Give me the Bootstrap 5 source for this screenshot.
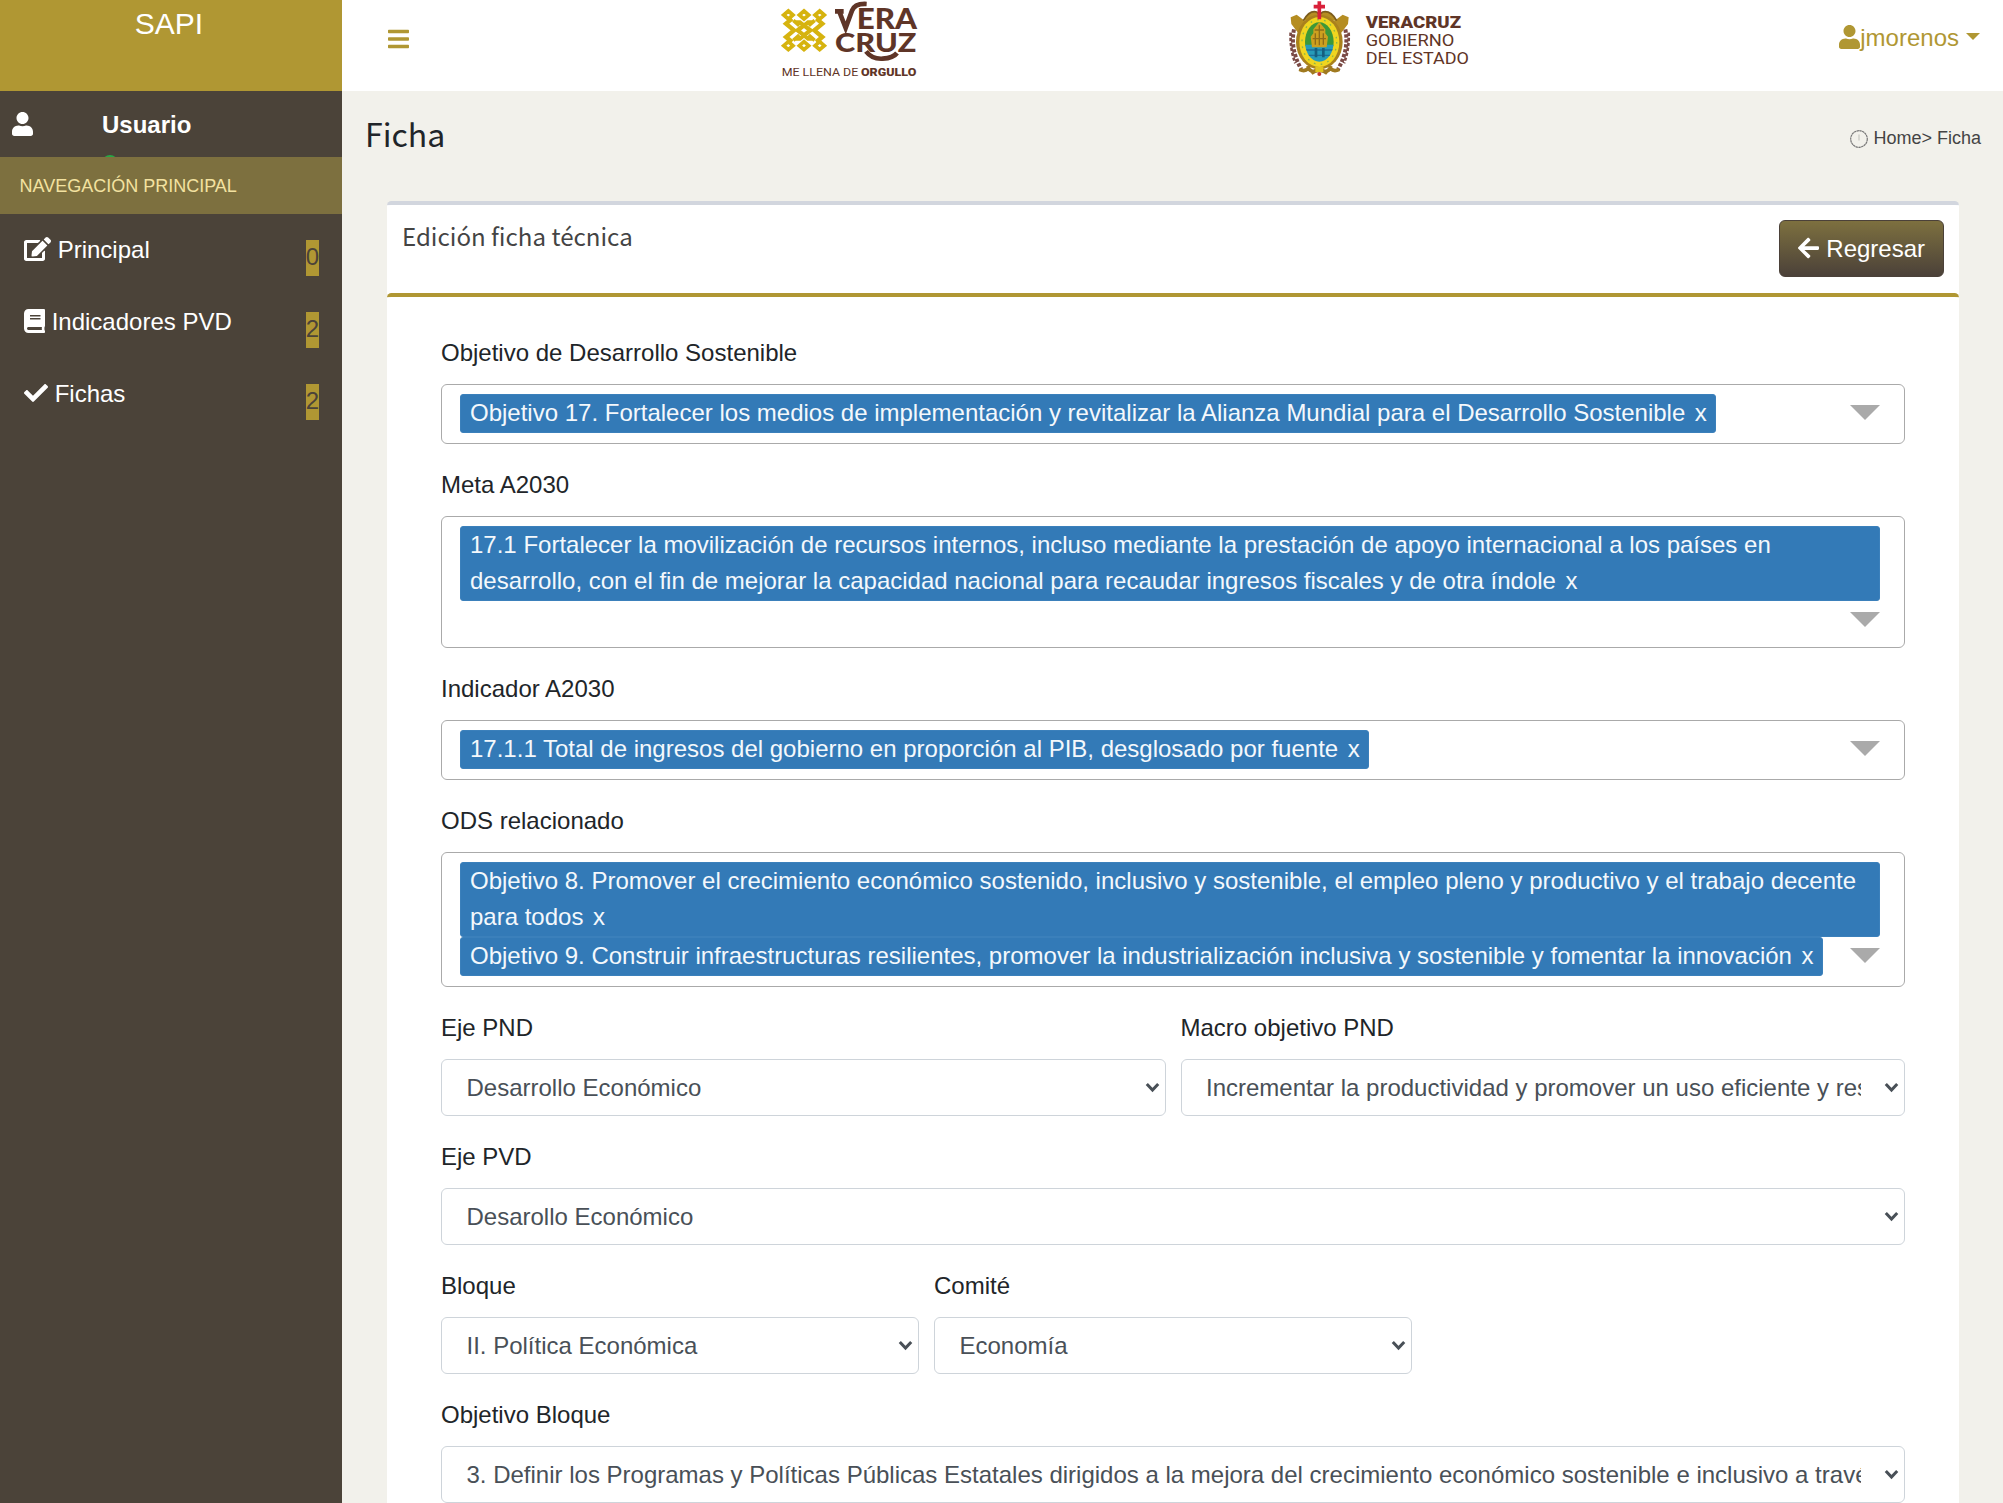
<!DOCTYPE html>
<html lang="es">
<head>
<meta charset="utf-8">
<title>SAPI - Ficha</title>
<link rel="stylesheet" href="https://cdn.jsdelivr.net/npm/bootstrap@5.3.0/dist/css/bootstrap.min.css">
<style>
body{font-family:"Liberation Sans",Arial,sans-serif;font-size:24px;line-height:36px;color:#212529;background:#f2f1eb;height:1503px;overflow:hidden}
.fa-ico{height:24px;width:auto;fill:currentColor;vertical-align:-3px;flex:none}
.side{width:342px;height:1503px;background:#4b4339;color:#fff;flex:none}
.brand{height:91px;background:#b09733;font-size:30px;line-height:45px;padding-top:1px;padding-right:4px}
.user-panel{height:66px;padding:16px 12px 0 12px;overflow:hidden}
.user-panel .fa-ico{margin-top:5px}
.user-info{margin-left:69px}
.status-dot{display:block;width:16px;height:16px;border-radius:50%;background:#28a745;margin-top:12px}
.side-title{height:57px;padding:16px 19.5px 14px;background:#7d703f;color:#f3e2a0;font-size:18px;line-height:27px}
.side-link{height:72px;padding:18px 23px 0 24px;color:#fff;text-decoration:none}
.count{background:#b09733;color:#4b4339;height:36px;margin-top:8px;line-height:34px}
.topbar{height:91px;background:#fff;color:#b09733}
.topbar>.menu-btn{margin-left:45.5px;margin-top:27px;height:24px;line-height:24px;display:block}
.logo-a{margin-left:361px}
.logo-b{margin-left:350px}
.user-menu{margin:20px 23px 0 auto;color:#b09733}
.user-menu::after{border-width:7px;border-bottom:0;margin-left:7px;vertical-align:6px}
.src-font{font-family:"Noto Sans CJK SC","Noto Sans",sans-serif;font-weight:400}
.page-head{padding:22px 22px 0 23px;height:110px}
.page-head h1{font-size:32px;line-height:40px;margin:0}
.crumbs{font-size:18px;line-height:27px;color:#444;padding-top:12px;gap:5px}
.panel{margin:0 44px 0 45px;background:#fff;border-top:4px solid #d2d6de;border-radius:4.5px 4.5px 0 0}
.panel-top{height:88px;padding:15px 15px 0}
.panel-top h3{font-size:24.1px;line-height:32px;color:#444;margin:0}
.btn-back{height:57px;padding:9px 18px;font-size:24px;line-height:36px;color:#fff;border:1.5px solid #4b4139;border-radius:6px;background:linear-gradient(#7d703f,#4b4139)}
.btn-back .fa-ico{margin-right:1px}
.inner{border-top:4px solid #b09733;border-radius:4.5px 4.5px 0 0;padding:38px 54px 0;height:1211px}
.form-group{margin-bottom:23px}
.form-group label{display:block;margin-bottom:13px}
.form-row{--bs-gutter-x:15px}
.multi{border:1.5px solid #aaa;border-radius:6px;padding:9px 24.5px 9.5px 18px;min-height:60px}
.chip{background:#337ab7;border:1px solid #3b80bb;color:#f4f8fc;border-radius:3px;padding:0 8.5px 0 9px;line-height:36px;min-height:39px;max-width:100%}
.chip-lg{min-height:75px}
.chip .rm{margin-left:9.5px}
.tri{width:30px;border:15px solid transparent;border-top-color:#aaa;border-bottom:0;margin:11px 0 0 auto;height:15px}
.meta .tri{margin-top:11px;margin-bottom:10.5px}
.form-group .form-select{height:57px;padding:2px 43px 0 24.5px;font-size:24px;line-height:36px;color:#495057;border:1.5px solid #ced4da;border-radius:6px;
background:#fff url("data:image/svg+xml,%3Csvg xmlns='http://www.w3.org/2000/svg' viewBox='0 0 15 11'%3E%3Cpath d='M1.8 2l5.7 6 5.7-6' fill='none' stroke='%23495057' stroke-width='3'/%3E%3C/svg%3E") no-repeat right 5px center/15px 11px}
</style>
<script src="https://cdn.jsdelivr.net/npm/bootstrap@5.3.0/dist/js/bootstrap.bundle.min.js"></script>
</head>
<body>
<svg class="d-none">
<symbol id="i-user" viewBox="0 0 448 512"><path d="M224 256c70.7 0 128-57.3 128-128S294.7 0 224 0 96 57.3 96 128s57.3 128 128 128zm89.6 32h-16.7c-22.2 10.2-46.9 16-72.9 16s-50.6-5.8-72.9-16h-16.7C60.2 288 0 348.2 0 422.4V464c0 26.5 21.5 48 48 48h352c26.5 0 48-21.5 48-48v-41.6c0-74.2-60.2-134.4-134.4-134.4z"/></symbol>
</svg>
<div class="d-flex">
<aside class="side">
  <div class="brand text-center">SAPI</div>
  <div class="user-panel d-flex">
    <svg class="fa-ico" width="21" height="24"><use href="#i-user"/></svg>
    <div class="user-info"><b class="d-block">Usuario</b><i class="status-dot"></i></div>
  </div>
  <div class="side-title">NAVEGACIÓN PRINCIPAL</div>
  <nav>
    <a class="side-link d-flex justify-content-between align-items-start"><span><svg class="fa-ico" viewBox="0 0 576 512"><path d="M402.6 83.2l90.2 90.2c3.8 3.8 3.8 10 0 13.8L274.4 405.6l-92.8 10.3c-12.4 1.4-22.9-9.1-21.5-21.5l10.3-92.8L388.8 83.2c3.8-3.8 10-3.8 13.8 0zm162-22.9l-48.8-48.8c-15.2-15.2-39.9-15.2-55.2 0l-35.4 35.4c-3.8 3.8-3.8 10 0 13.8l90.2 90.2c3.8 3.8 10 3.8 13.8 0l35.4-35.4c15.2-15.3 15.2-40 0-55.2zM384 346.2V448H64V128h229.8c3.2 0 6.2-1.3 8.5-3.5l40-40c7.6-7.6 2.2-20.5-8.5-20.5H48C21.5 64 0 85.5 0 112v352c0 26.5 21.5 48 48 48h352c26.5 0 48-21.5 48-48V306.2c0-10.7-12.9-16-20.5-8.5l-40 40c-2.2 2.3-3.5 5.3-3.5 8.5z"/></svg> Principal</span><span class="count">0</span></a>
    <a class="side-link d-flex justify-content-between align-items-start"><span><svg class="fa-ico" viewBox="0 0 448 512"><path d="M448 360V24c0-13.3-10.7-24-24-24H96C43 0 0 43 0 96v320c0 53 43 96 96 96h328c13.3 0 24-10.7 24-24v-16c0-7.5-3.5-14.3-8.9-18.7-4.2-15.4-4.2-59.3 0-74.7 5.4-4.3 8.9-11.1 8.9-18.6zM128 134c0-3.3 2.7-6 6-6h212c3.3 0 6 2.7 6 6v20c0 3.3-2.7 6-6 6H134c-3.3 0-6-2.7-6-6v-20zm0 64c0-3.3 2.7-6 6-6h212c3.3 0 6 2.7 6 6v20c0 3.3-2.7 6-6 6H134c-3.3 0-6-2.7-6-6v-20zm253.4 250H96c-17.7 0-32-14.3-32-32 0-17.6 14.4-32 32-32h285.4c-1.9 17.1-1.9 46.9 0 64z"/></svg> Indicadores PVD</span><span class="count">2</span></a>
    <a class="side-link d-flex justify-content-between align-items-start"><span><svg class="fa-ico" viewBox="0 0 512 512"><path d="M173.898 439.404l-166.4-166.4c-9.997-9.997-9.997-26.206 0-36.204l36.203-36.204c9.997-9.998 26.207-9.998 36.204 0L192 312.69 432.095 72.596c9.997-9.997 26.207-9.997 36.204 0l36.203 36.204c9.997 9.997 9.997 26.206 0 36.204l-294.4 294.401c-9.998 9.997-26.207 9.997-36.204-.001z"/></svg> Fichas</span><span class="count">2</span></a>
  </nav>
</aside>
<div class="flex-grow-1">
  <header class="topbar d-flex align-items-start">
    <span class="menu-btn"><svg class="fa-ico d-block" viewBox="0 0 448 512"><path d="M16 132h416c8.837 0 16-7.163 16-16V76c0-8.837-7.163-16-16-16H16C7.163 60 0 67.163 0 76v40c0 8.837 7.163 16 16 16zm0 160h416c8.837 0 16-7.163 16-16v-40c0-8.837-7.163-16-16-16H16c-8.837 0-16 7.163-16 16v40c0 8.837 7.163 16 16 16zm0 160h416c8.837 0 16-7.163 16-16v-40c0-8.837-7.163-16-16-16H16c-8.837 0-16 7.163-16 16v40c0 8.837 7.163 16 16 16z"/></svg></span>
    <!-- Logo Veracruz: rombos y rótulo -->
    <svg class="logo-a" width="160" height="90" viewBox="0 0 480 270">
      <g fill="none" stroke="#d6b30f" stroke-width="11">
        <path d="M55 33l14 12-14 12-14-12zM102 33l14 12-14 12-14-12zM149 33l14 12-14 12-14-12zM55 125l14 12-14 12-14-12zM102 125l14 12-14 12-14-12zM149 125l14 12-14 12-14-12z"/>
        <path d="M102 76l19 15-19 15-19-15z" stroke-width="13"/>
        <path d="M66 56L48 71l24 20-24 20 18 15M139 56l18 15-24 20 24 20-18 15" stroke-width="13"/>
        <path d="M70 61l18 16M134 61l-18 16M70 121l18-16M134 121l-18-16M78 66h12l12 10 12-10h12M78 117h12l12-10 12 10h12"/>
      </g>
      <g fill="#5f3527" font-family="Lato,sans-serif" font-weight="900">
        <text x="260" y="88" font-size="84" textLength="181" lengthAdjust="spacingAndGlyphs">ERA</text>
        <text x="195" y="156" font-size="82" textLength="244" lengthAdjust="spacingAndGlyphs">CRUZ</text>
        <text x="35" y="228" font-size="31" font-weight="400" font-family="Roboto,sans-serif" textLength="230" lengthAdjust="spacingAndGlyphs">ME LLENA DE</text>
        <text x="273" y="228" font-size="31" font-weight="900" font-family="Roboto,sans-serif" textLength="166" lengthAdjust="spacingAndGlyphs">ORGULLO</text>
      </g>
      <path d="M195 34h26M208 35l19 49 19-52q8-22 44-20M288 154q18 24 50 22 32-2 43-17" fill="none" stroke="#5f3527" stroke-width="14"/>
    </svg>
    <!-- Escudo y rótulo del gobierno del estado -->
    <svg class="logo-b" width="200" height="90" viewBox="0 0 600 270">
      <g stroke="#7a4a45" stroke-width="12" stroke-dasharray="10 5" fill="none"><path d="M42 88q-12 60 22 120M196 88q12 60-22 120"/><path d="M32 98q-2 50 14 92M206 98q2 50-14 92" stroke-width="8"/></g>
      <path d="M34 72l-2-20 18-8 34 26-30 28zM204 72l2-20-18-8-34 26 30 28z" fill="#b58d22"/>
      <path d="M70 62q18-32 40-26l8 8 10-8q24-6 42 26" fill="#b58d22" stroke="#7c5c1c" stroke-width="5"/>
      <ellipse cx="118" cy="126" rx="70" ry="82" fill="#a9811d"/>
      <ellipse cx="118" cy="126" rx="60" ry="75" fill="#f0d51f"/>
      <ellipse cx="118" cy="126" rx="52" ry="67" fill="none" stroke="#8bb64a" stroke-width="4" stroke-dasharray="5 16"/>
      <clipPath id="ov"><ellipse cx="118" cy="126" rx="43" ry="59"/></clipPath>
      <g clip-path="url(#ov)"><path d="M70 60h100v78H70z" fill="#3d9838"/><path d="M70 134h100v60H70z" fill="#269bb9"/><path d="M76 150h84M76 166h84" stroke="#1d6e99" stroke-width="4"/>
      <path d="M100 88l18-22 18 22v12l8 10-4 32H96l-4-32 8-10z" fill="#cda01f"/><path d="M104 90h28M98 116h40M106 100v34M130 100v34M118 76v60" stroke="#906c18" stroke-width="4"/><path d="M104 144h8v28h-8zM126 144h8v28h-8z" fill="#155f80"/></g>
      <path d="M118 4v54M101 20h34" stroke="#d9203a" stroke-width="11" fill="none"/>
      <path d="M84 198q4 24 34 12 30 12 34-12M94 220q24-20 48 0M58 208q16 8 26-2M178 208q-16 8-26-2" fill="none" stroke="#a07a20" stroke-width="11"/>
      <path d="M106 200h24v16h-24z" fill="#e0c41d"/><circle cx="118" cy="222" r="6" fill="#c23a2c"/>
      <g fill="#5f3527" font-family="Roboto,sans-serif" font-size="51">
        <text x="257" y="84" font-weight="900" textLength="286" lengthAdjust="spacingAndGlyphs">VERACRUZ</text>
        <text x="257" y="138" textLength="266" lengthAdjust="spacingAndGlyphs">GOBIERNO</text>
        <text x="257" y="191" textLength="310" lengthAdjust="spacingAndGlyphs">DEL ESTADO</text>
      </g>
    </svg>
    <a class="user-menu dropdown-toggle text-decoration-none d-block"><svg class="fa-ico" width="21" height="24"><use href="#i-user"/></svg>jmorenos</a>
  </header>
  <div class="page-head d-flex justify-content-between align-items-start">
    <h1 class="src-font">Ficha</h1>
    <div class="crumbs d-flex align-items-center">
      <svg width="18" height="18" viewBox="0 0 18 18" fill="none"><circle cx="9" cy="9" r="8.3" stroke="#777" stroke-width="1.2" stroke-dasharray="2.4 .4"/><path d="M9 4.5v6" stroke="#d8d8d2" stroke-width="2"/></svg>
      <span>Home&gt; Ficha</span>
    </div>
  </div>
  <main class="panel">
    <div class="panel-top d-flex justify-content-between align-items-start">
      <h3 class="src-font">Edición ficha técnica</h3>
      <button class="btn btn-back"><svg class="fa-ico" viewBox="0 0 448 512"><path d="M257.5 445.1l-22.2 22.2c-9.4 9.4-24.6 9.4-33.9 0L7 273c-9.4-9.4-9.4-24.6 0-33.9L201.4 44.7c9.4-9.4 24.6-9.4 33.9 0l22.2 22.2c9.5 9.5 9.3 25-.4 34.3L136.6 216H424c13.3 0 24 10.7 24 24v32c0 13.3-10.7 24-24 24H136.6l120.5 114.8c9.8 9.3 10 24.8.4 34.3z"/></svg> Regresar</button>
    </div>
    <form class="inner">
      <div class="form-group"><label>Objetivo de Desarrollo Sostenible</label>
        <div class="multi d-flex flex-wrap align-items-start"><div class="chip">Objetivo 17. Fortalecer los medios de implementación y revitalizar la Alianza Mundial para el Desarrollo Sostenible<span class="rm">x</span></div><i class="tri"></i></div></div>
      <div class="form-group"><label>Meta A2030</label>
        <div class="multi meta d-flex flex-wrap align-items-start"><div class="chip chip-lg">17.1 Fortalecer la movilización de recursos internos, incluso mediante la prestación de apoyo internacional a los países en desarrollo, con el fin de mejorar la capacidad nacional para recaudar ingresos fiscales y de otra índole<span class="rm">x</span></div><i class="tri"></i></div></div>
      <div class="form-group"><label>Indicador A2030</label>
        <div class="multi d-flex flex-wrap align-items-start"><div class="chip">17.1.1 Total de ingresos del gobierno en proporción al PIB, desglosado por fuente<span class="rm">x</span></div><i class="tri"></i></div></div>
      <div class="form-group"><label>ODS relacionado</label>
        <div class="multi d-flex flex-wrap align-items-start"><div class="chip chip-lg">Objetivo 8. Promover el crecimiento económico sostenido, inclusivo y sostenible, el empleo pleno y productivo y el trabajo decente para todos<span class="rm">x</span></div><div class="chip">Objetivo 9. Construir infraestructuras resilientes, promover la industrialización inclusiva y sostenible y fomentar la innovación<span class="rm">x</span></div><i class="tri"></i></div></div>
      <div class="row form-row">
        <div class="col-6 form-group"><label>Eje PND</label><select class="form-select"><option>Desarrollo Económico</option></select></div>
        <div class="col-6 form-group"><label>Macro objetivo PND</label><select class="form-select"><option>Incrementar la productividad y promover un uso eficiente y responsable de los recursos</option></select></div>
      </div>
      <div class="form-group"><label>Eje PVD</label><select class="form-select"><option>Desarollo Económico</option></select></div>
      <div class="row form-row">
        <div class="col-4 form-group"><label>Bloque</label><select class="form-select"><option>II. Política Económica</option></select></div>
        <div class="col-4 form-group"><label>Comité</label><select class="form-select"><option>Economía</option></select></div>
      </div>
      <div class="form-group"><label>Objetivo Bloque</label><select class="form-select"><option>3. Definir los Programas y Políticas Públicas Estatales dirigidos a la mejora del crecimiento económico sostenible e inclusivo a través de la inversión</option></select></div>
    </form>
  </main>
</div>
</div>
</body>
</html>
